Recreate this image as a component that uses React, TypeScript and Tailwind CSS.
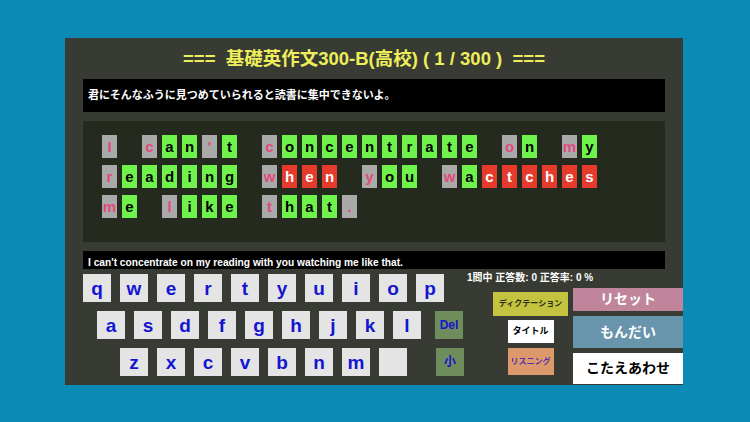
import React from 'react'

type TileKind = 'h' | 'g' | 'r' | ' '

const answerRows: { text: string; kinds: string }[] = [
  { text: "I can't concentrate on my", kinds: 'h hgghg hgggggggggg hg hg' },
  { text: 'reading when you wactches', kinds: 'hgggggg hrrr hgg hgrrrrrr' },
  { text: 'me like that.', kinds: 'hg hggg hgggh' },
]

const tileStyles: Record<Exclude<TileKind, ' '>, string> = {
  h: 'bg-[#a9a9a9] text-[#e2497c]',
  g: 'bg-[#6ff24c] text-black',
  r: 'bg-[#e53a2c] text-white',
}

const keyRows = [
  ['q', 'w', 'e', 'r', 't', 'y', 'u', 'i', 'o', 'p'],
  ['a', 's', 'd', 'f', 'g', 'h', 'j', 'k', 'l'],
  ['z', 'x', 'c', 'v', 'b', 'n', 'm', ''],
]

const sans = "font-['Liberation_Sans','Noto_Sans_CJK_JP',sans-serif]"

function Tile({ ch, kind }: { ch: string; kind: TileKind }) {
  if (kind === ' ') return <div className="w-[15px] h-[23px]" />
  return (
    <div
      className={`w-[15px] h-[23px] flex items-center justify-center text-[15px] font-bold leading-none ${tileStyles[kind]}`}
    >
      {ch}
    </div>
  )
}

function Key({ label }: { label: string }) {
  return (
    <div className="w-[28px] h-[28px] bg-[#e4e4e4] flex items-center justify-center text-[19px] font-bold text-[#1414d2] leading-none">
      {label}
    </div>
  )
}

function SideKey({ label, className = '' }: { label: string; className?: string }) {
  return (
    <div
      className={`w-[28px] h-[28px] bg-[#6e8c5c] flex items-center justify-center text-[12px] font-bold text-[#1414d2] leading-none ${className}`}
    >
      {label}
    </div>
  )
}

export default function App() {
  return (
    <div className={`w-[750px] h-[422px] bg-[#0a8ab4] pt-[38px] pl-[65px] ${sans}`}>
      <div className="w-[618px] h-[347px] bg-[#383b33] flex flex-col">
        {/* title */}
        <div className="h-[41px] flex items-center justify-center pr-[20px] text-[18.5px] font-bold text-[#eeee5a] whitespace-pre">
          {'===  基礎英作文300-B(高校) ( 1 / 300 )  ==='}
        </div>

        {/* question */}
        <div className="ml-[18px] w-[582px] h-[33px] bg-black flex items-center pl-[5px] text-[11px] font-bold text-white">
          君にそんなふうに見つめていられると読書に集中できないよ。
        </div>

        {/* answer tiles */}
        <div className="ml-[18px] mt-[9px] w-[582px] h-[121px] bg-[#252a1f] pt-[14px] pl-[19px] flex flex-col gap-[7px]">
          {answerRows.map((row, i) => (
            <div key={i} className="flex gap-[5px]">
              {row.text.split('').map((ch, j) => (
                <Tile key={j} ch={ch} kind={row.kinds[j] as TileKind} />
              ))}
            </div>
          ))}
        </div>

        {/* correct sentence */}
        <div className="ml-[18px] mt-[9px] w-[582px] h-[18px] bg-black flex items-end pl-[5px] text-[10.2px] font-bold text-white leading-[13px]">
          I can't concentrate on my reading with you watching me like that.
        </div>

        {/* bottom: keyboard + controls */}
        <div className="flex items-start">
          <div className="ml-[18px] mt-[5px] flex flex-col gap-[9px] w-[381px]">
            <div className="flex gap-[9px]">
              {keyRows[0].map(k => (
                <Key key={k} label={k} />
              ))}
            </div>
            <div className="flex gap-[9px] ml-[14px]">
              {keyRows[1].map(k => (
                <Key key={k} label={k} />
              ))}
              <SideKey label="Del" className="ml-[5px]" />
            </div>
            <div className="flex gap-[9px] ml-[37px]">
              {keyRows[2].map((k, i) => (
                <Key key={i} label={k} />
              ))}
              <SideKey label="小" className="ml-[20px]" />
            </div>
          </div>

          <div className="ml-[3px] flex flex-col">
            <div className="mt-[2px] h-[14px] leading-[14px] text-[10px] font-bold text-white whitespace-pre">
              1問中 正答数: 0 正答率: 0 %
            </div>
            <div className="flex">
              <div className="ml-[26px] mt-[7px] w-[75px] flex flex-col items-center">
                <div className="w-[75px] h-[24px] bg-[#c4c33f] flex items-center justify-center text-[8px] font-bold text-[#2a2a10]">
                  ディクテーション
                </div>
                <div className="mt-[4px] w-[46px] h-[23px] bg-white flex items-center justify-center text-[9px] font-bold text-black">
                  タイトル
                </div>
                <div className="mt-[5px] w-[46px] h-[27px] bg-[#dc9a6c] flex items-center justify-center text-[8px] font-bold text-[#5a2ea8]">
                  リスニング
                </div>
              </div>
              <div className="ml-[5px] mt-[3px] w-[110px] flex flex-col">
                <div className="h-[23px] bg-[#c0859b] flex items-center justify-center text-[14px] font-bold text-white">
                  リセット
                </div>
                <div className="mt-[5px] h-[32px] bg-[#6894ac] flex items-center justify-center text-[14px] font-bold text-white">
                  もんだい
                </div>
                <div className="mt-[5px] h-[31px] bg-white flex items-center justify-center text-[14px] font-bold text-black">
                  こたえあわせ
                </div>
              </div>
            </div>
          </div>
        </div>
      </div>
    </div>
  )
}
